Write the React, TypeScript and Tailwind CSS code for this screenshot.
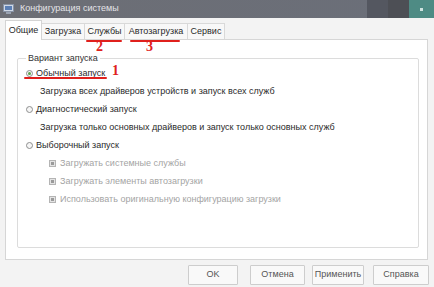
import React from "react";

const font = { fontFamily: '"Liberation Sans", Arial, sans-serif' };

function Radio({ checked }: { checked?: boolean }) {
    return (
        <span className="w-[7px] h-[7px] rounded-full border border-[#8e8f8f] bg-[#f6f6f6] flex items-center justify-center shrink-0">
            {checked && <span className="w-[3px] h-[3px] rounded-full bg-[#5aa24a]" />}
        </span>
    );
}

function Check() {
    return (
        <span className="w-[7px] h-[7px] border border-[#b4b4b4] bg-[#e4e4e4] flex items-center justify-center shrink-0">
            <span className="w-[3px] h-[3px] bg-[#9a9a9a]" />
        </span>
    );
}

const tabs = [
    { label: "Общие", w: "w-[37px]" },
    { label: "Загрузка", w: "w-[43px]" },
    { label: "Службы", w: "w-[40px]" },
    { label: "Автозагрузка", w: "w-[63px]" },
    { label: "Сервис", w: "w-[37px]" },
];

export default function App() {
    return (
        <div
            className="relative w-[434px] h-[287px] overflow-hidden bg-[#f3f3f3] text-[9px] text-[#2a2a2a] flex flex-col"
            style={font}
        >
            {/* title bar */}
            <div className="h-[18px] flex items-center bg-gradient-to-r from-[#6c6e75] to-[#6b6f79] shrink-0">
                <svg width="11" height="10" viewBox="0 0 11 10" className="ml-[3px]">
                    <rect x="0.5" y="0.5" width="10" height="7" fill="#cfd8e6" stroke="#8893a6" />
                    <rect x="2" y="2" width="7" height="4" fill="#5b7fb5" />
                    <rect x="3" y="8" width="5" height="2" fill="#9aa3b2" />
                </svg>
                <span className="ml-[6px] text-[#e4e4e8] text-[9px]">Конфигурация системы</span>
                <div className="ml-auto flex h-full">
                    <div className="w-[21px] h-full bg-[#545760]" />
                    <div className="w-[21px] h-full bg-[#4d4f55]" />
                    <div className="w-[25px] h-full bg-[#4e8b84] flex items-center justify-center">
                        <span className="w-[3px] h-[3px] bg-[#cfe3e0]" />
                    </div>
                </div>
            </div>

            {/* tabs */}
            <div className="flex items-end h-[21px] pl-[5px] shrink-0">
                {tabs.map((t, i) => (
                    <div
                        key={t.label}
                        className={
                            i === 0
                                ? `${t.w} h-[20px] bg-white border border-b-0 border-[#d4d4d4] flex items-center justify-center relative -mb-px z-10`
                                : `${t.w} h-[16px] bg-[#f8f8f8] border border-b-0 border-l-0 border-[#d9d9d9] flex items-center justify-center`
                        }
                    >
                        {t.label}
                    </div>
                ))}
            </div>

            {/* tab panel */}
            <div className="mx-[5px] w-[423px] h-[221px] bg-white border border-[#d6d6d6] shrink-0 pt-[12px] pl-[11px] pr-[8px]">
                <fieldset className="border border-[#dcdcdc] rounded-[2px] h-[196px] pl-[8px]">
                    <legend className="px-[2px] text-[#333]">Вариант запуска</legend>
                    <div className="flex flex-col -mt-px">
                        <div className="h-[18px] flex items-center gap-[3px]">
                            <Radio checked />
                            <span>Обычный запуск</span>
                        </div>
                        <div className="h-[18px] flex items-center pl-[14px]">
                            Загрузка всех драйверов устройств и запуск всех служб
                        </div>
                        <div className="h-[18px] flex items-center gap-[3px]">
                            <Radio />
                            <span>Диагностический запуск</span>
                        </div>
                        <div className="h-[18px] flex items-center pl-[14px]">
                            Загрузка только основных драйверов и запуск только основных служб
                        </div>
                        <div className="h-[18px] flex items-center gap-[3px]">
                            <Radio />
                            <span>Выборочный запуск</span>
                        </div>
                        <div className="flex flex-col pl-[23px] text-[#a4a4a4]">
                            <div className="h-[18px] flex items-center gap-[4px]">
                                <Check />
                                <span>Загружать системные службы</span>
                            </div>
                            <div className="h-[18px] flex items-center gap-[4px]">
                                <Check />
                                <span>Загружать элементы автозагрузки</span>
                            </div>
                            <div className="h-[18px] flex items-center gap-[4px]">
                                <Check />
                                <span>Использовать оригинальную конфигурацию загрузки</span>
                            </div>
                        </div>
                    </div>
                </fieldset>
            </div>

            {/* buttons */}
            <div className="flex items-center h-[27px] pt-[3px] text-[#555]">
                <button className="ml-[188px] w-[50px] h-[20px] border border-[#cdcdcd] bg-[#f9f9f9] rounded-[1px] font-normal">OK</button>
                <button className="ml-[12px] w-[55px] h-[20px] border border-[#cdcdcd] bg-[#f9f9f9] rounded-[1px] font-normal">Отмена</button>
                <button className="ml-[7px] w-[52px] h-[20px] border border-[#cdcdcd] bg-[#f9f9f9] rounded-[1px] font-normal">Применить</button>
                <button className="ml-[9px] w-[56px] h-[20px] border border-[#cdcdcd] bg-[#f9f9f9] rounded-[1px] font-normal">Справка</button>
            </div>

            {/* red annotations */}
            <div className="absolute left-[86px] top-[40px] w-[36px] h-[2px] rounded-full bg-[#e0201c]" />
            <div className="absolute left-[130px] top-[40px] w-[50px] h-[2px] rounded-full bg-[#e0201c]" />
            <div className="absolute left-[24px] top-[77px] w-[83px] h-[2px] rounded-full bg-[#e0201c]" />
            <span
                className="absolute left-[96px] top-[40px] text-[14px] font-bold text-[#e0201c] leading-none"
                style={{ fontFamily: '"Liberation Serif", serif' }}
            >
                2
            </span>
            <span
                className="absolute left-[146px] top-[40px] text-[14px] font-bold text-[#e0201c] leading-none"
                style={{ fontFamily: '"Liberation Serif", serif' }}
            >
                3
            </span>
            <span
                className="absolute left-[112px] top-[64px] text-[14px] font-bold text-[#e0201c] leading-none"
                style={{ fontFamily: '"Liberation Serif", serif' }}
            >
                1
            </span>
        </div>
    );
}
